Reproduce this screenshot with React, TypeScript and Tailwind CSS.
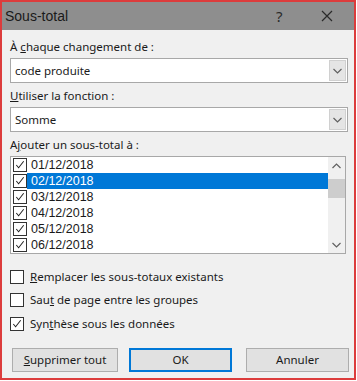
import React from "react";

const font = { fontFamily: '"Noto Sans", "Open Sans", sans-serif' };

function Chevron({ up = false }: { up?: boolean }) {
  return (
    <svg width="9" height="6" viewBox="0 0 9 6" className="block">
      <path
        d={up ? "M0.5 5 L4.5 1 L8.5 5" : "M0.5 1 L4.5 5 L8.5 1"}
        fill="none"
        stroke="#606060"
        strokeWidth="1.2"
      />
    </svg>
  );
}

function Check({ size = 13 }: { size?: number }) {
  return (
    <svg width={size} height={size} viewBox="0 0 13 13" className="block">
      <path d="M2.5 6.5 L5 9.5 L10.5 2.5" fill="none" stroke="#222" strokeWidth="1.1" />
    </svg>
  );
}

function Box({ checked }: { checked: boolean }) {
  return (
    <div className="w-[14px] h-[14px] border border-[#333] bg-white flex items-center justify-center shrink-0">
      {checked && <Check size={12} />}
    </div>
  );
}

function Select({ value }: { value: string }) {
  return (
    <div className="w-[338px] h-[25px] border border-[#a8a8a8] bg-white flex items-stretch">
      <div className="flex-1 flex items-center pl-[4px] text-[11.5px] text-[#1a1a1a]">{value}</div>
      <div className="w-[17px] m-[1px] bg-[#e5e5e5] border border-[#d0d0d0] flex items-center justify-center">
        <Chevron />
      </div>
    </div>
  );
}

const dates = ["01/12/2018", "02/12/2018", "03/12/2018", "04/12/2018", "05/12/2018", "06/12/2018"];

export default function App() {
  return (
    <div className="w-[357px] h-[381px] bg-white" style={font}>
      <div className="w-[356px] h-[380px] border-2 border-[#dc3c3c] bg-[#f0f0f0] flex flex-col">
        <div className="h-[28px] bg-[#8e8e8e] flex items-center pl-[3px] shrink-0">
          <span
            className="text-[14px] text-[#1a1a1a]"
            style={{ fontFamily: '"Liberation Sans", Arial, sans-serif' }}
          >
            Sous-total
          </span>
          <span className="ml-[208px] text-[15px] text-[#2a2a2a]">?</span>
          <svg width="12" height="12" viewBox="0 0 12 12" className="ml-[38px]">
            <path d="M1 1 L11 11 M11 1 L1 11" stroke="#2a2a2a" strokeWidth="1.2" />
          </svg>
        </div>
        <div className="pl-[8px] flex flex-col text-[11.5px] text-[#1a1a1a]">
          <div className="mt-[9px] h-[16px] leading-[16px]">
            À <span className="underline">c</span>haque changement de :
          </div>
          <div className="mt-[3px]">
            <Select value="code produite" />
          </div>
          <div className="mt-[5px] h-[16px] leading-[16px]">
            <span className="underline">U</span>tiliser la fonction :
          </div>
          <div className="mt-[3px]">
            <Select value="Somme" />
          </div>
          <div className="mt-[5px] h-[16px] leading-[16px]">
            A<span className="underline">j</span>outer un sous-total à :
          </div>
          <div className="mt-[3px] w-[336px] h-[98px] border border-[#a8a8a8] bg-white flex">
            <div className="flex-1 flex flex-col">
              {dates.map((d, i) => (
                <div key={d} className="h-[16px] flex items-center pl-[2px]">
                  <Box checked />
                  <div
                    className={
                      "flex-1 h-[16px] flex items-center pl-[4px] text-[12.5px] " +
                      (i === 1 ? "bg-[#0078d7] text-white" : "text-[#1a1a1a]")
                    }
                    style={{ fontFamily: '"Liberation Sans", Arial, sans-serif' }}
                  >
                    {d}
                  </div>
                </div>
              ))}
            </div>
            <div className="w-[17px] bg-[#f0f0f0] flex flex-col items-center">
              <div className="h-[17px] flex items-center justify-center">
                <Chevron up />
              </div>
              <div className="w-[17px] h-[19px] bg-[#cdcdcd] mt-[5px]" />
              <div className="flex-1" />
              <div className="h-[17px] flex items-center justify-center">
                <Chevron />
              </div>
            </div>
          </div>
          <div className="mt-[15px] h-[16px] flex items-center gap-[6px]">
            <Box checked={false} />
            <span>
              <span className="underline">R</span>emplacer les sous-totaux existants
            </span>
          </div>
          <div className="mt-[7px] h-[16px] flex items-center gap-[6px]">
            <Box checked={false} />
            <span>
              Sau<span className="underline">t</span> de page entre les groupes
            </span>
          </div>
          <div className="mt-[8px] h-[16px] flex items-center gap-[6px]">
            <Box checked />
            <span>
              Syn<span className="underline">t</span>hèse sous les données
            </span>
          </div>
          <div className="mt-[16px] flex pl-[2px]">
            <div className="w-[106px] h-[24px] border border-[#adadad] bg-[#e1e1e1] flex items-center justify-center">
              <span>
                <span className="underline">S</span>upprimer tout
              </span>
            </div>
            <div className="ml-[11px] w-[103px] h-[24px] border-2 border-[#0078d7] bg-[#e1e1e1] flex items-center justify-center">
              OK
            </div>
            <div className="ml-[14px] w-[103px] h-[24px] border border-[#adadad] bg-[#e1e1e1] flex items-center justify-center">
              Annuler
            </div>
          </div>
        </div>
      </div>
    </div>
  );
}
